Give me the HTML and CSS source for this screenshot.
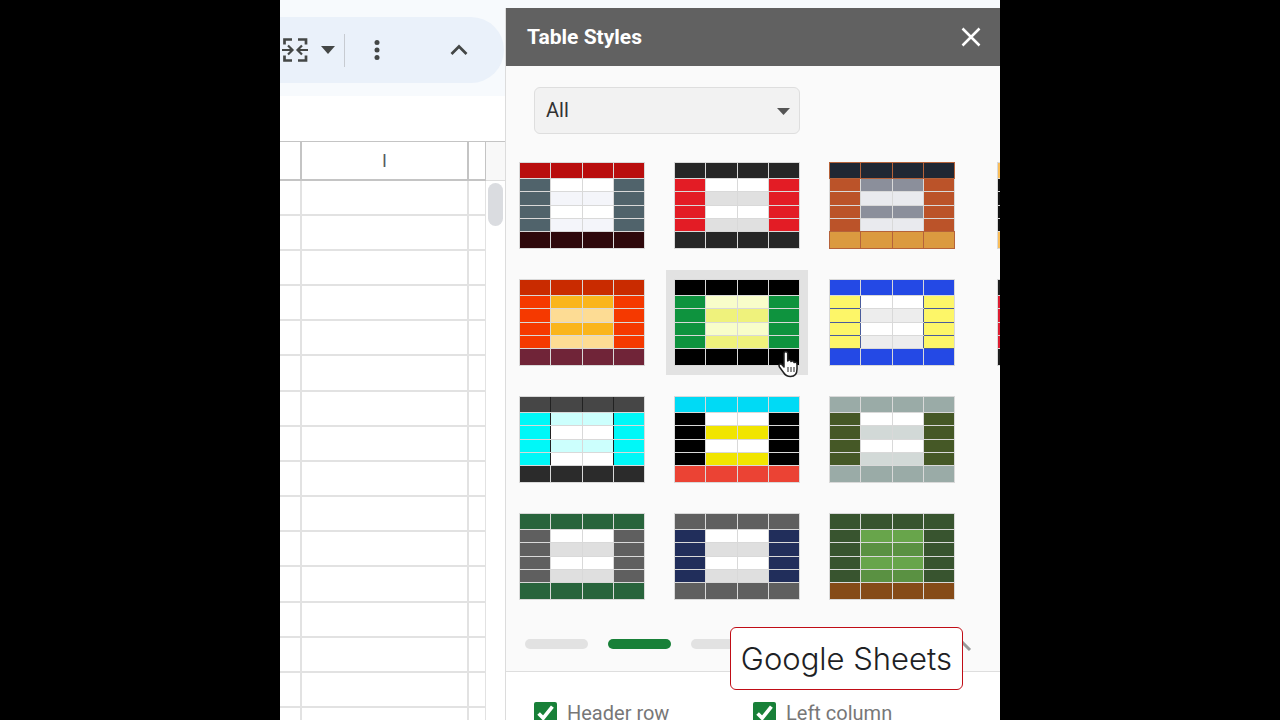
FILE: index.html
```html
<!DOCTYPE html>
<html lang="en">
<head>
  <meta charset="UTF-8" />
  <meta name="viewport" content="width=device-width, initial-scale=1.0" />
  <title>Table Styles - Google Sheets</title>
  <link rel="stylesheet" href="styles.css">
</head>
<body>
  <main class="stage">
    <section class="sheet">
      <div class="toolbar-area">
        <div class="toolbar">
          <button class="tool merge" type="button" aria-label="Merge cells">
            <svg width="28" height="26" viewBox="0 0 28 26" fill="none" stroke="#444746" stroke-width="2.700">
              <path d="M11 2.500H3.500V7.500M3.500 18.500v5H11M17 2.500h8V7.500M25 18.500v5h-8"/>
              <path d="M1 13h10M7 8.500l4.500 4.500L7 17.500M27 13H17M21 8.500L16.500 13l4.500 4.500" stroke-width="2.200"/>
            </svg>
          </button>
          <button class="tool" type="button" aria-label="Merge options">
            <svg width="14" height="8" viewBox="0 0 14 8"><path d="M0 0h14L7 8z" fill="#444746"/></svg>
          </button>
          <span class="divider"></span>
          <button class="tool more" type="button" aria-label="More">
            <svg width="6" height="20" viewBox="0 0 6 20" fill="#444746"><circle cx="3" cy="2.500" r="2.500"/><circle cx="3" cy="10" r="2.500"/><circle cx="3" cy="17.500" r="2.500"/></svg>
          </button>
          <button class="tool" type="button" aria-label="Hide the menus">
            <svg width="18" height="12" viewBox="0 0 18 12" fill="none" stroke="#444746" stroke-width="2.700"><path d="M1.500 10L9 2.500l7.500 7.500"/></svg>
          </button>
        </div>
      </div>
      <div class="formula-bar"></div>
      <div class="grid-area">
        <table class="cells">
          <thead><tr><th></th><th>I</th><th></th></tr></thead>
          <tbody id="rows"></tbody>
        </table>
        <div class="scroll">
          <div class="scroll-corner"></div>
          <div class="scroll-thumb"></div>
        </div>
      </div>
    </section>

    <aside class="panel">
      <header class="panel-header">
        <h1>Table Styles</h1>
        <button class="close" type="button" aria-label="Close">
          <svg width="20" height="20" viewBox="0 0 20 20" stroke="#fff" stroke-width="2.500"><path d="M1.500 1.500l17 17M18.500 1.500l-17 17"/></svg>
        </button>
      </header>
      <div class="styles-area">
        <div class="filter">
          <select aria-label="Style filter"><option>All</option></select>
          <svg class="arrow" width="13" height="7" viewBox="0 0 13 7"><path d="M0 0h13L6.500 7z" fill="#555"/></svg>
        </div>
        <div class="carousel">
          <div class="page" id="page"></div>
          <div class="page" id="nextPage"></div>
        </div>
        <div class="pager">
          <button class="dot" type="button" aria-label="Page 1"></button>
          <button class="dot active" type="button" aria-label="Page 2"></button>
          <button class="dot" type="button" aria-label="Page 3"></button>
          <button class="collapse" type="button" aria-label="Collapse">
            <svg width="28" height="16" viewBox="0 0 28 16" fill="none" stroke="#999" stroke-width="3"><path d="M2 14L14 2l12 12"/></svg>
          </button>
        </div>
      </div>
      <div class="options">
        <label><input type="checkbox" checked>Header row</label>
        <label><input type="checkbox" checked>Left column</label>
      </div>
    </aside>

    <div class="caption">Google Sheets</div>
  </main>

  <script src="script.js"></script>
</body>
</html>
```
FILE: styles.css
```css
* {
  box-sizing: border-box;
}
body {
  margin: 0;
  background: #000;
  font-family: Roboto, Arial, sans-serif;
}
button {
  border: none;
  padding: 0;
  background: none;
  cursor: pointer;
}
svg {
  display: block;
}
.stage {
  position: relative;
  display: flex;
  max-width: 720px;
  height: 100vh;
  margin: 0 auto;
  overflow: hidden;
  background: #f7fafd;
}

/* spreadsheet */
.sheet {
  display: flex;
  flex-direction: column;
  flex: 0 0 225px;
  overflow: hidden;
}
.toolbar-area {
  padding: 17px 1px 13px 0;
}
.toolbar {
  display: flex;
  align-items: center;
  height: 66px;
  padding-right: 36px;
  border-radius: 0 33px 33px 0;
  background: #eaf1fa;
}
.merge {
  margin: 0 12px 0 1px;
}
.divider {
  width: 1px;
  height: 33px;
  margin: 0 29px 0 9px;
  background: #c7cbd1;
}
.more {
  margin-right: auto;
}
.formula-bar {
  flex: 0 0 45px;
  background: #fff;
}
.grid-area {
  display: flex;
  flex: 1;
  min-height: 0;
  border-top: 1px solid #c4c4c4;
  background: #fff;
}
.cells {
  flex: 1;
  align-self: flex-start;
  table-layout: fixed;
  border-collapse: separate;
  border-spacing: 0;
}
.cells th, .cells td {
  width: 17px;
  height: 35px;
  padding: 0;
  border-right: 2px solid #e2e2e2;
  border-bottom: 2px solid #e2e2e2;
}
.cells tr :first-child {
  width: 22px;
}
.cells tr :nth-child(2) {
  width: 167px;
}
.cells tr :last-child {
  border-right-width: 1px;
}
.cells th {
  height: 39px;
  border-color: #c4c4c4;
  color: #575b5f;
  font-size: 18px;
  font-weight: 400;
}
.cells tbody tr:nth-child(6n) td {
  height: 36px;
}
.scroll {
  flex: 0 0 19px;
}
.scroll-corner {
  height: 39px;
  border-bottom: 1px solid #ddd;
  background: #f8f8f8;
}
.scroll-thumb {
  height: 43px;
  margin: 2px;
  border-radius: 8px;
  background: #dadce0;
}

/* side panel */
.panel {
  flex: 1;
  min-width: 0;
  margin-top: 8px;
  border-left: 1px solid #dcdcdc;
  background: #fff;
  overflow: hidden;
}
.panel-header {
  display: flex;
  align-items: center;
  justify-content: space-between;
  height: 58px;
  padding: 0 19px 0 21px;
  background: #616161;
  color: #fff;
}
.panel-header h1 {
  margin: 0;
  font-size: 21px;
  font-weight: 700;
}
.styles-area {
  padding-top: 21px;
  border-bottom: 1px solid #dedede;
  background: #fafafa;
}
.filter {
  position: relative;
  width: 266px;
  margin-left: 28px;
}
.filter select {
  display: block;
  appearance: none;
  width: 100%;
  height: 47px;
  padding: 0 11px 2px;
  border: 1px solid #dedede;
  border-radius: 6px;
  background: #f2f2f2;
  color: #333;
  font: 20px Roboto, Arial, sans-serif;
}
.filter .arrow {
  position: absolute;
  top: 21px;
  right: 10px;
  pointer-events: none;
}
.carousel {
  display: flex;
  gap: 26px;
  margin-top: 19px;
  padding-left: 5px;
  overflow: hidden;
}
.page {
  display: grid;
  grid-template-columns: repeat(3, 142px);
  align-content: start;
  gap: 12px 13px;
  flex: none;
}
.style-btn {
  position: relative;
  height: 105px;
  padding: 9px 8px;
}
.style-btn.hovered {
  background: #e2e2e2;
}
.swatch {
  display: grid;
  grid-template-columns: 30px 31px 30px 30px;
  grid-template-rows: 15px 12px 13px 12px 12px 16px;
  gap: 1px;
  padding: 1px;
  background: #d9d9d9;
}
.head { background: var(--head); }
.side { background: var(--side); }
.odd { background: var(--odd); }
.even { background: var(--even); }
.foot { background: var(--foot); }
.framed .head, .framed .foot {
  box-shadow: 0 0 0 1px #b5623a;
}
.ruled .side.first {
  box-shadow: 1px 0 #4a5c9c, 0 1px #4a5c9c;
}
.ruled .side.last {
  box-shadow: -1px 0 #4a5c9c, 0 1px #4a5c9c;
}
.barred .head + .head {
  box-shadow: -1px 0 #222;
}
.barred .side.first {
  box-shadow: 1px 0 #222;
}
.barred .side.last {
  box-shadow: -1px 0 #222;
}
.cursor {
  position: absolute;
  left: 111px;
  top: 80px;
}
.pager {
  display: flex;
  align-items: center;
  gap: 20px;
  height: 62px;
  padding: 8px 28px 0 19px;
}
.dot {
  width: 63px;
  height: 10px;
  border-radius: 5px;
  background: #e2e2e2;
}
.dot.active {
  background: #188038;
}
.collapse {
  margin-left: auto;
}
.options {
  display: grid;
  grid-template-columns: 219px 1fr;
  padding: 29px 0 0 28px;
  color: #777;
  font-size: 20px;
}
.options label {
  display: flex;
  align-items: center;
  gap: 10px;
}
.options input {
  width: 23px;
  height: 23px;
  margin: 0;
  accent-color: #188038;
}

.caption {
  position: absolute;
  right: 37px;
  bottom: 30px;
  padding: 0 10px;
  border: 1px solid #c00d16;
  border-radius: 6px;
  background: #fff;
  color: #1d2124;
  font: 300 31px/61px Inter, sans-serif;
}
```
FILE: script.js
```js
const styles = [
  { head: "#b90e0e", side: "#50636b", odd: "#ffffff", even: "#f4f5fa", foot: "#2e080b" },
  { head: "#262626", side: "#e31c25", odd: "#ffffff", even: "#e0e0e0", foot: "#262626" },
  { head: "#202733", side: "#bb5329", odd: "#8b8f9b", even: "#e9eaee", foot: "#db9a40", lines: "framed" },
  { head: "#c92b00", side: "#f53900", odd: "#fab51c", even: "#fddc94", foot: "#702438" },
  { head: "#000000", side: "#0e933e", odd: "#f8fdca", even: "#eff27c", foot: "#000000", hovered: true },
  { head: "#2449e5", side: "#fdf668", odd: "#ffffff", even: "#ededed", foot: "#2449e5", lines: "ruled" },
  { head: "#464646", side: "#00f8f8", odd: "#ccfffd", even: "#ffffff", foot: "#2b2b2b", lines: "barred" },
  { head: "#00daf5", side: "#000000", odd: "#ffffff", even: "#f1e500", foot: "#eb4334" },
  { head: "#9aaba7", side: "#455826", odd: "#ffffff", even: "#d2d9d7", foot: "#9aaba7" },
  { head: "#28643c", side: "#5f5f5f", odd: "#ffffff", even: "#dfdfdf", foot: "#28643c" },
  { head: "#5f5f5f", side: "#212e5b", odd: "#ffffff", even: "#dfdfdf", foot: "#5f5f5f" },
  { head: "#38542f", side: "#38542f", odd: "#68a54b", even: "#5a9142", foot: "#854b18" }
];

const nextStyles = [
  { head: "#f9bd59", side: "#111111", odd: "#ffffff", even: "#eeeeee", foot: "#f9bd59" },
  { head: "#1c1c1c", side: "#dc1c30", odd: "#ffffff", even: "#eeeeee", foot: "#1c1c1c" }
];

const cursor = `
  <svg class="cursor" width="22" height="28" viewBox="0 0 22 28">
    <path d="M7 3.500C7 1 10.500 1 10.700 3.500V11c1-1.500 3-1 3.300.5 1-1 2.800-.5 3 1 1.300-.8 3 0 3 2V19c0 4-2 7.500-6.500 7.500-3.500 0-5.500-1.500-7-4L2.500 17C1 14.500 3.500 13 5 14.800L7 17z"
      fill="#fff" stroke="#222" stroke-width="1.500" stroke-linejoin="round"/>
    <path d="M11 17v5M14 17v5M17 17v5" stroke="#222"/>
  </svg>`;

function cellClass(row, col) {
  if (row === 0) return "head";
  if (row === 5) return "foot";
  if (col === 0) return "side first";
  if (col === 3) return "side last";
  return row % 2 ? "odd" : "even";
}

function addStyle(page, style, index) {
  let cells = "";
  for (let row = 0; row < 6; row++) {
    for (let col = 0; col < 4; col++) {
      cells += `<span class="${cellClass(row, col)}"></span>`;
    }
  }
  const button = document.createElement("button");
  button.type = "button";
  button.className = style.hovered ? "style-btn hovered" : "style-btn";
  button.setAttribute("aria-label", "Table style " + (index + 1));
  button.innerHTML = `<span class="swatch ${style.lines || ""}">${cells}</span>`;
  if (style.hovered) button.innerHTML += cursor;
  for (const part of ["head", "side", "odd", "even", "foot"]) {
    button.style.setProperty("--" + part, style[part]);
  }
  page.appendChild(button);
}

styles.forEach((style, i) => addStyle(document.getElementById("page"), style, i));

const nextPage = document.getElementById("nextPage");
nextStyles.forEach((style, i) => {
  addStyle(nextPage, style, i + styles.length);
  nextPage.lastChild.style.gridColumn = 1;
});

document.getElementById("rows").innerHTML = "<tr><td></td><td></td><td></td></tr>".repeat(16);
```
